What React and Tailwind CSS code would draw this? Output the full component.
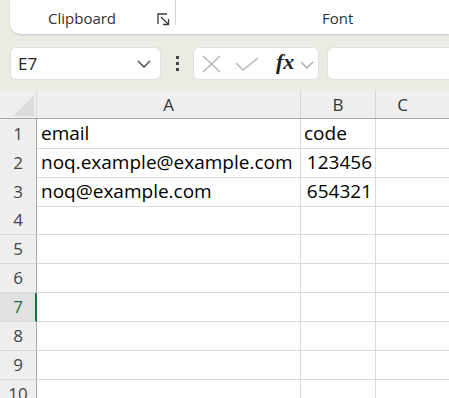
import React from "react";

const rows = [
  { n: 1, a: "email", b: "code", bAlign: "left" },
  { n: 2, a: "noq.example@example.com", b: "123456", bAlign: "right" },
  { n: 3, a: "noq@example.com", b: "654321", bAlign: "right" },
  { n: 4 },
  { n: 5 },
  { n: 6 },
  { n: 7, active: true },
  { n: 8 },
  { n: 9 },
  { n: 10 },
];

function Launcher() {
  return (
    <svg width="13" height="13" viewBox="0 0 13 13" fill="none" stroke="#3b3b3b" strokeWidth="1.3">
      <path d="M1 11V1h9" />
      <path d="M4 4l7.5 7.5" />
      <path d="M6 11.5h5.5V6" />
    </svg>
  );
}

function Chevron({ color = "#444", w = 14 }) {
  return (
    <svg width={w} height="8" viewBox="0 0 14 8" fill="none" stroke={color} strokeWidth="1.4">
      <path d="M1 1l6 6 6-6" />
    </svg>
  );
}

export default function App() {
  return (
    <div
      className="w-[449px] h-[398px] overflow-hidden bg-[#ebebe4] text-[#222]"
      style={{ fontFamily: '"Open Sans", "Noto Sans", sans-serif' }}
    >
      {/* ribbon */}
      <div className="ml-[10px] h-[34px] bg-white rounded-bl-[10px] shadow-[0_1px_2px_rgba(0,0,0,0.15)] flex">
        <div className="w-[165px] relative flex items-center pl-[38px] pt-[3px]">
          <span className="text-[15px] text-[#333]">Clipboard</span>
          <div className="absolute left-[147px] top-[13px]">
            <Launcher />
          </div>
        </div>
        <div className="w-px h-[25px] bg-[#d6d6d6]" />
        <div className="flex-1 flex items-center pl-[146px] pt-[3px]">
          <span className="text-[15px] text-[#333]">Font</span>
        </div>
      </div>

      {/* formula bar */}
      <div className="mt-[13px] h-[33px] flex items-stretch">
        <div className="ml-[10px] w-[151px] bg-white rounded-[6px] border border-[#e0e0e0] flex items-center justify-between pl-[7px] pr-[9px]">
          <span className="text-[17px] text-[#222]">E7</span>
          <Chevron />
        </div>
        <div className="w-[32px] flex flex-col items-center justify-center gap-[3px]">
          <div className="w-[3px] h-[3px] bg-[#444]" />
          <div className="w-[3px] h-[3px] bg-[#444]" />
          <div className="w-[3px] h-[3px] bg-[#444]" />
        </div>
        <div className="w-[126px] bg-white rounded-[6px] border border-[#e0e0e0] flex items-center pl-[8px]">
          <svg width="19" height="18" viewBox="0 0 19 18" fill="none" stroke="#b4b4b4" strokeWidth="1.4">
            <path d="M1 1l17 16M18 1L1 17" />
          </svg>
          <svg className="ml-[14px]" width="24" height="14" viewBox="0 0 24 14" fill="none" stroke="#b4b4b4" strokeWidth="1.4">
            <path d="M1 6l7 7L23 1" />
          </svg>
          <span
            className="ml-[17px] text-[22px] italic font-bold text-[#222] leading-none mb-[3px]"
            style={{ fontFamily: '"Liberation Serif", "DejaVu Serif", serif' }}
          >
            fx
          </span>
          <div className="ml-[6px] mt-[2px]">
            <Chevron color="#a8a8a8" w={14} />
          </div>
        </div>
        <div className="ml-[8px] flex-1 bg-white rounded-l-[6px] border border-r-0 border-[#e0e0e0]" />
      </div>

      {/* grid */}
      <div className="mt-[11px] bg-white">
        <div className="grid grid-cols-[37px_264px_75px_1fr] h-[28px] bg-[#efefef] border-b border-[#a9a9a9] text-[#333] text-[17px]">
          <div className="border-r border-[#dadada] relative">
            <svg className="absolute left-[13px] top-[4px]" width="21" height="21" viewBox="0 0 21 21">
              <path d="M21 0V21H0Z" fill="#dcdcdc" />
            </svg>
          </div>
          <div className="border-r border-[#d4d4d4] flex items-center justify-center">A</div>
          <div className="border-r border-[#d4d4d4] flex items-center justify-center">B</div>
          <div className="flex items-center justify-center pr-[20px]">C</div>
        </div>
        {rows.map((r) => (
          <div key={r.n} className="grid grid-cols-[37px_264px_75px_1fr] h-[29px]">
            <div
              className={
                r.active
                  ? "bg-[#e1e1e1] border-b border-[#d9d9d9] border-r-2 border-r-[#1e7145] flex items-center justify-center text-[17px] text-[#1e7145] pl-[1px]"
                  : "bg-[#efefef] border-b border-[#d9d9d9] border-r border-r-[#a9a9a9] flex items-center justify-center text-[17px] text-[#444]"
              }
            >
              {r.n}
            </div>
            <div className="border-r border-b border-[#dadada] flex items-center pl-[4px] text-[19px] text-black whitespace-nowrap overflow-hidden">
              {r.a}
            </div>
            <div
              className={
                "border-r border-b border-[#dadada] flex items-center text-[19px] text-black whitespace-nowrap " +
                (r.bAlign === "right" ? "justify-end pr-[3px]" : "pl-[3px]")
              }
            >
              {r.b}
            </div>
            <div className="border-b border-[#dadada]" />
          </div>
        ))}
      </div>
    </div>
  );
}
